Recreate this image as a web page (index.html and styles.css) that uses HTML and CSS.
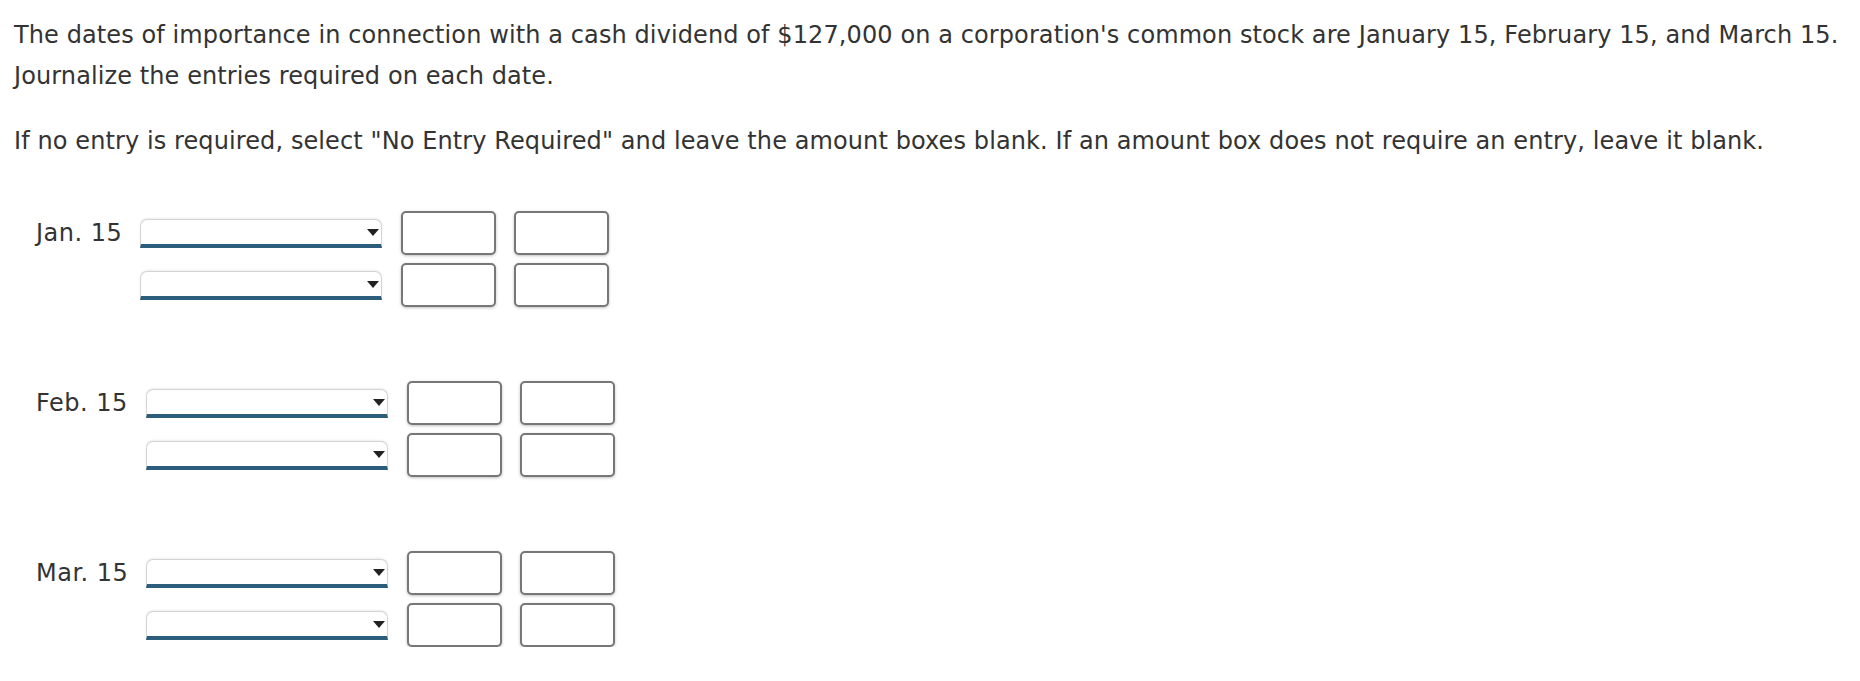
FILE: index.html
```html
<!DOCTYPE html>
<html>
<head>
<meta charset="utf-8">
<link rel="stylesheet" href="styles.css">
</head>
<body>
<div class="page">
  <p class="intro">The dates of importance in connection with a cash dividend of $127,000 on a corporation's common stock are January 15, February 15, and March 15.<br>Journalize the entries required on each date.</p>
  <p class="intro">If no entry is required, select "No Entry Required" and leave the amount boxes blank. If an amount box does not require an entry, leave it blank.</p>

  <div class="entry">
    <div class="date">Jan. 15</div>
    <div class="lines">
      <div class="line"><div class="select"><span class="arrow"></span></div><div class="amount"></div><div class="amount"></div></div>
      <div class="line"><div class="select"><span class="arrow"></span></div><div class="amount"></div><div class="amount"></div></div>
    </div>
  </div>

  <div class="entry">
    <div class="date">Feb. 15</div>
    <div class="lines">
      <div class="line"><div class="select"><span class="arrow"></span></div><div class="amount"></div><div class="amount"></div></div>
      <div class="line"><div class="select"><span class="arrow"></span></div><div class="amount"></div><div class="amount"></div></div>
    </div>
  </div>

  <div class="entry">
    <div class="date">Mar. 15</div>
    <div class="lines">
      <div class="line"><div class="select"><span class="arrow"></span></div><div class="amount"></div><div class="amount"></div></div>
      <div class="line"><div class="select"><span class="arrow"></span></div><div class="amount"></div><div class="amount"></div></div>
    </div>
  </div>
</div>
</body>
</html>
```

FILE: styles.css
```css
html, body {
  margin: 0;
  padding: 0;
  background: #ffffff;
}
.page {
  padding: 15px 0 0 14px;
  font-family: "DejaVu Sans", "Verdana", sans-serif;
  font-size: 24px;
  color: #333333;
}
.intro {
  margin: 0 0 24px 0;
  line-height: 41px;
  white-space: nowrap;
  letter-spacing: 0.1px;
}
.entry {
  display: flex;
  align-items: flex-start;
  padding-left: 22px;
  margin-bottom: 74px;
}
.entry:first-of-type {
  margin-top: 49px;
}
.entry:last-child {
  margin-bottom: 0;
}
.date {
  line-height: 44px;
  margin-right: 18px;
  font-size: 24px;
  letter-spacing: 0.5px;
}
.lines {
  display: flex;
  flex-direction: column;
  gap: 8px;
}
.line {
  display: flex;
  align-items: center;
  gap: 19px;
}
.select {
  position: relative;
  width: 240px;
  height: 24px;
  background: #ffffff;
  border: 1px solid #d4d4d4;
  border-bottom: 4px solid #2c5d7c;
  border-radius: 7px 7px 0 0;
  box-shadow: 0 -1px 2px rgba(0,0,0,0.08);
  box-sizing: content-box;
}
.arrow {
  position: absolute;
  right: 2px;
  top: 9px;
  width: 0;
  height: 0;
  border-left: 6px solid transparent;
  border-right: 6px solid transparent;
  border-top: 7px solid #222222;
}
.amount {
  box-sizing: border-box;
  width: 95px;
  height: 44px;
  border: 2px solid #777777;
  border-radius: 5px;
  background: #ffffff;
  box-shadow: 0 1px 3px rgba(0,0,0,0.25);
}
.amount + .amount {
  margin-left: -1px;
}
```
